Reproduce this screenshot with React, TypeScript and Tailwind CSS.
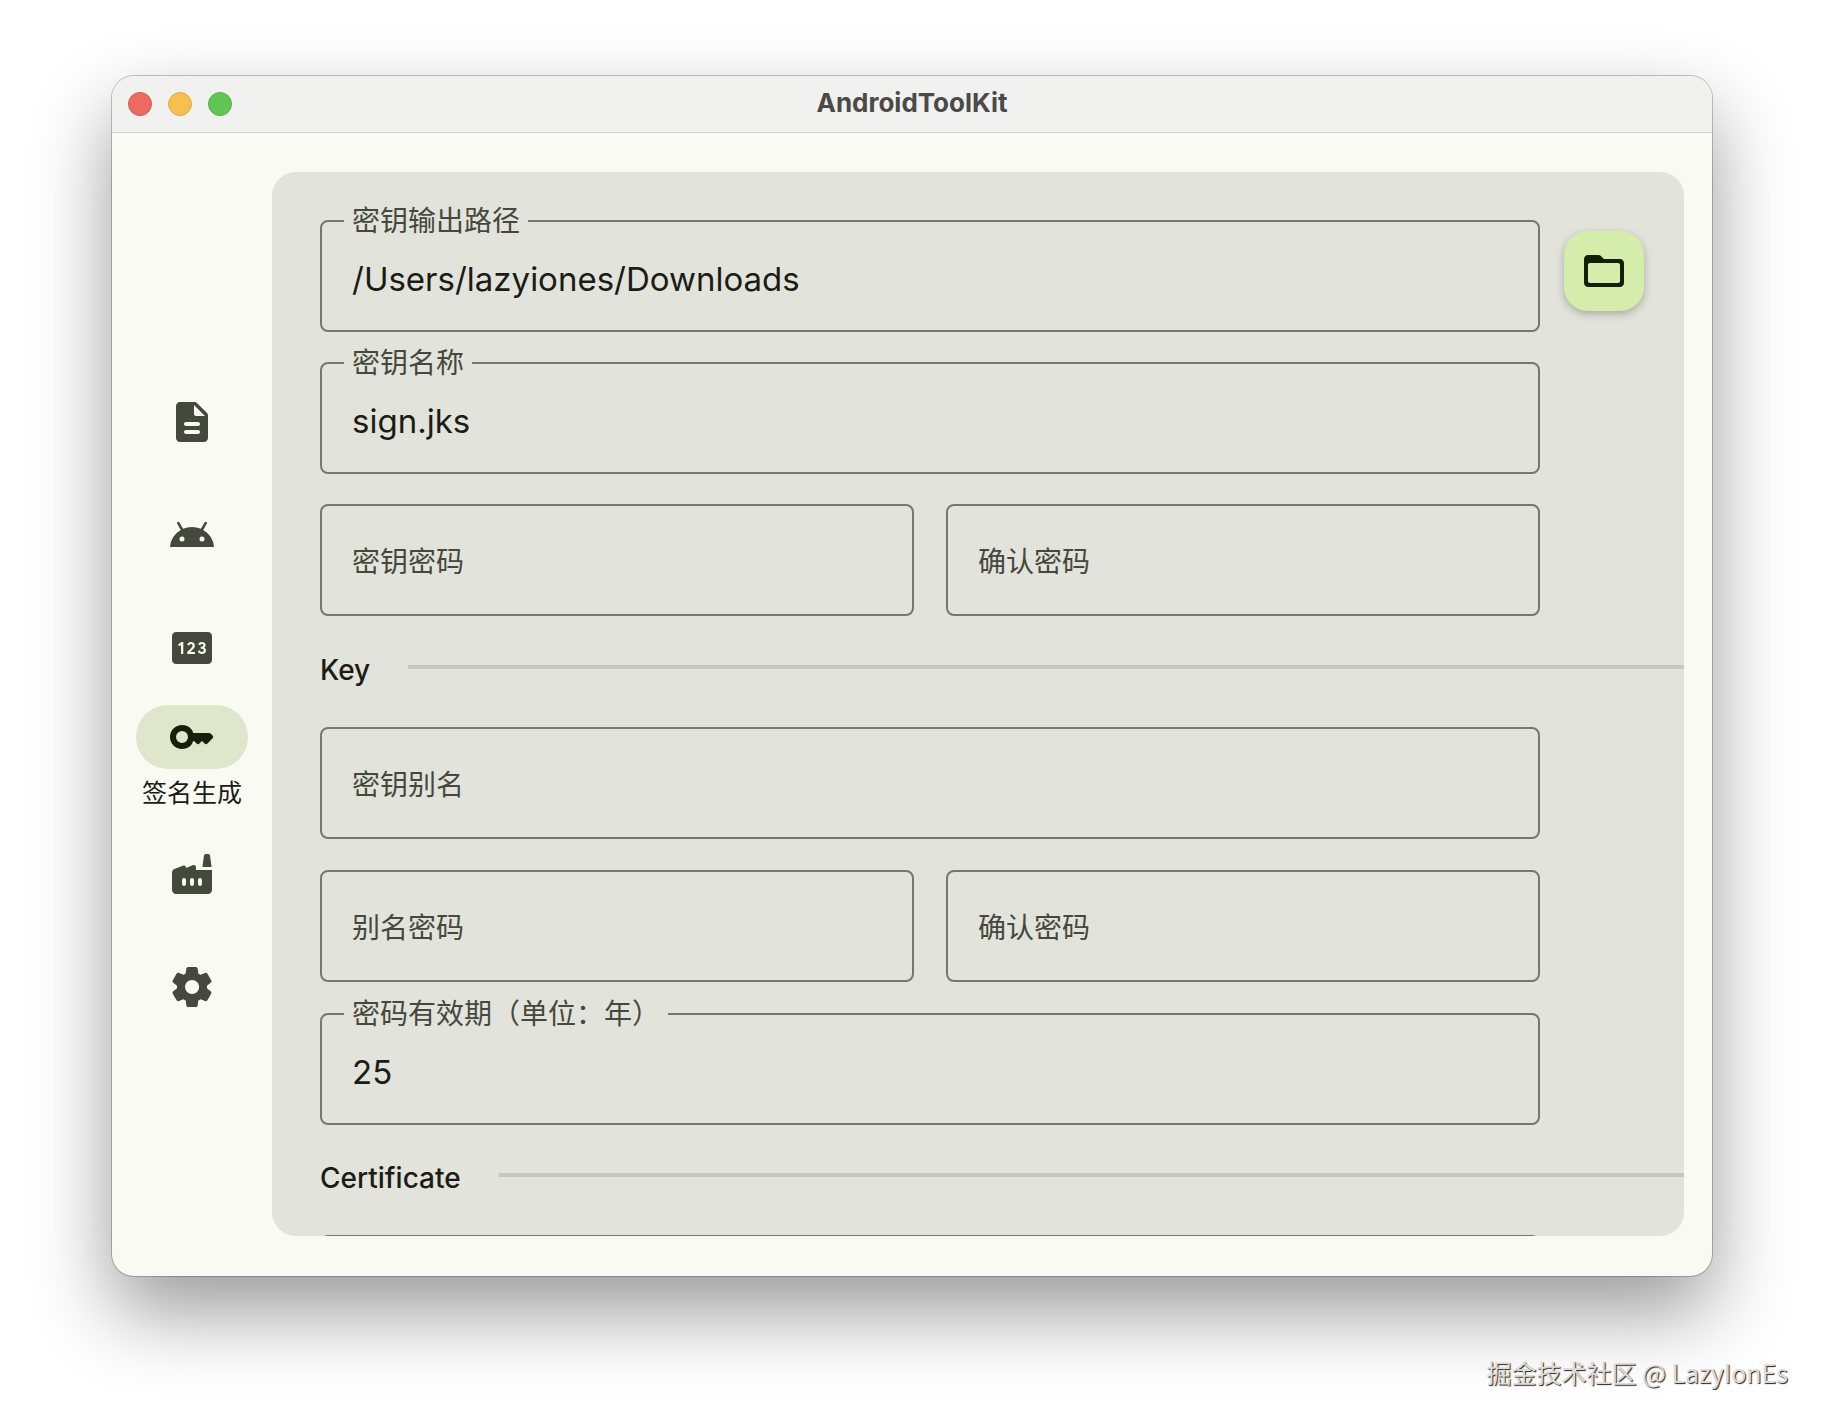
import React, { useState } from 'react';
import { MdPin } from 'react-icons/md';

const iconPaths = {
  description:
    'M14.59 2.59c-.38-.38-.89-.59-1.42-.59H6c-1.1 0-2 .9-2 2v16c0 1.1.89 2 1.99 2H18c1.1 0 2-.9 2-2V8.83c0-.53-.21-1.04-.59-1.41l-4.82-4.83zM15 18H9c-.55 0-1-.45-1-1s.45-1 1-1h6c.55 0 1 .45 1 1s-.45 1-1 1zm0-4H9c-.55 0-1-.45-1-1s.45-1 1-1h6c.55 0 1 .45 1 1s-.45 1-1 1zm-2-6V3.5L18.5 9H14c-.55 0-1-.45-1-1z',
  android:
    'M17.6 9.48l1.84-3.18c.16-.31.04-.69-.26-.85a.637.637 0 0 0-.83.22l-1.88 3.24a11.463 11.463 0 0 0-8.94 0L5.65 5.67a.643.643 0 0 0-.87-.2c-.28.18-.37.54-.22.83L6.4 9.48A10.78 10.78 0 0 0 1 18h22a10.78 10.78 0 0 0-5.4-8.52zM7 15.25a1.25 1.25 0 1 1 0-2.5 1.25 1.25 0 0 1 0 2.5zm10 0a1.25 1.25 0 1 1 0-2.5 1.25 1.25 0 0 1 0 2.5z',
  key: 'M20.59 10h-7.94A5.99 5.99 0 0 0 7 6c-3.31 0-6 2.69-6 6s2.69 6 6 6a5.99 5.99 0 0 0 5.65-4H13l1.29 1.29c.39.39 1.02.39 1.41 0L17 14l1.29 1.29c.39.39 1.03.39 1.42 0l2.59-2.61a1 1 0 0 0-.01-1.42l-.99-.97c-.2-.19-.45-.29-.71-.29zM7 15a3 3 0 1 1 0-6 3 3 0 0 1 0 6z',
  factory:
    'M22 10v10c0 1.1-.9 2-2 2H4c-1.1 0-2-.9-2-2v-8.6c0-.82.5-1.55 1.25-1.85L7.63 7.8c.65-.26 1.37.22 1.37.93V9l3.63-1.45c.65-.26 1.37.22 1.37.92V10h8zM17.96 2.88c.07-.5.5-.88 1-.88h1.07c.5 0 .93.38.99.88l.78 5.62h-4.6l.76-5.62zM8 18c.55 0 1-.45 1-1v-2c0-.55-.45-1-1-1s-1 .45-1 1v2c0 .55.45 1 1 1zm4 0c.55 0 1-.45 1-1v-2c0-.55-.45-1-1-1s-1 .45-1 1v2c0 .55.45 1 1 1zm4 0c.55 0 1-.45 1-1v-2c0-.55-.45-1-1-1s-1 .45-1 1v2c0 .55.45 1 1 1z',
  settings:
    'M19.5 12c0-.23-.01-.45-.03-.68l1.86-1.41c.4-.3.51-.86.26-1.3l-1.87-3.23a.987.987 0 0 0-1.25-.42l-2.15.91c-.37-.26-.76-.49-1.17-.68l-.29-2.31c-.06-.5-.49-.88-.99-.88h-3.73c-.51 0-.94.38-1 .88l-.29 2.31c-.41.19-.8.42-1.17.68l-2.15-.91c-.46-.2-1-.02-1.25.42L2.41 8.62c-.25.44-.14.99.26 1.3l1.86 1.41a7.343 7.343 0 0 0 0 1.35l-1.86 1.41c-.4.3-.51.86-.26 1.3l1.87 3.23c.25.44.79.62 1.25.42l2.15-.91c.37.26.76.49 1.17.68l.29 2.31c.06.5.49.88.99.88h3.73c.5 0 .93-.38.99-.88l.29-2.31c.41-.19.8-.42 1.17-.68l2.15.91c.46.2 1 .02 1.25-.42l1.87-3.23c.25-.44.14-.99-.26-1.3l-1.86-1.41c.03-.23.04-.45.04-.68zm-7.46 3.5c-1.93 0-3.5-1.57-3.5-3.5s1.57-3.5 3.5-3.5 3.5 1.57 3.5 3.5-1.57 3.5-3.5 3.5z',
  folder:
    'M20 6h-8l-1.41-1.41C10.21 4.21 9.7 4 9.17 4H4c-1.1 0-1.99.9-1.99 2L2 18c0 1.1.9 2 2 2h16c1.1 0 2-.9 2-2V8c0-1.1-.9-2-2-2zm-1 12H5c-.55 0-1-.45-1-1V9c0-.55.45-1 1-1h14c.55 0 1 .45 1 1v8c0 .55-.45 1-1 1z',
};

const Icon: React.FC<{ name: keyof typeof iconPaths }> = ({ name }) => (
  <svg viewBox="0 0 24 24" className="size-12" fill="currentColor" fillRule="evenodd" aria-hidden="true">
    <path d={iconPaths[name]} />
  </svg>
);

const navItems = [
  { id: 'info', icon: <Icon name="description" /> },
  { id: 'apk', icon: <Icon name="android" /> },
  { id: 'pin', icon: <MdPin className="size-12" /> },
  { id: 'sign', icon: <Icon name="key" />, label: '签名生成' },
  { id: 'build', icon: <Icon name="factory" /> },
  { id: 'settings', icon: <Icon name="settings" /> },
];

interface FieldProps {
  id: string;
  label: string;
  value: string;
  type?: string;
  onChange: (id: string, value: string) => void;
}

// Outlined field: the label sits in the border once there is a value
const Field: React.FC<FieldProps> = ({ id, label, value, type = 'text', onChange }) => (
  <fieldset className="h-28 min-w-0 flex-1 rounded-lg border-2 border-[#76786d] pl-[22px]">
    {value && (
      <legend className="h-0.5 px-2 leading-[2px]">
        <label htmlFor={id} className="text-[28px] text-[#45483d]">
          {label}
        </label>
      </legend>
    )}
    <input
      id={id}
      type={type}
      value={value}
      placeholder={label}
      aria-label={label}
      onChange={(e) => onChange(id, e.target.value)}
      className="h-full w-full bg-transparent px-2 pt-1.5 text-[33px] text-[#1a1c16] outline-none placeholder:text-[28px] placeholder:text-[#45483d] placeholder-shown:pt-0"
    />
  </fieldset>
);

const Section: React.FC<{ title: string }> = ({ title }) => (
  <div className="flex h-[110px] shrink-0 items-center gap-[38px] pb-1">
    <h2 className="text-[28px] font-medium text-[#1a1c16]">{title}</h2>
    <hr className="mb-1.5 flex-1 border-t-4 border-[#c6c7be]" />
  </div>
);

export default function App() {
  const [active, setActive] = useState('sign');
  const [form, setForm] = useState<Record<string, string>>({
    path: '/Users/lazyiones/Downloads',
    name: 'sign.jks',
    validity: '25',
  });

  const handleChange = (id: string, value: string) => setForm({ ...form, [id]: value });

  const field = (id: string, label: string, type?: string) => (
    <Field id={id} label={label} type={type} value={form[id] ?? ''} onChange={handleChange} />
  );

  return (
    <div className="relative flex h-screen flex-col bg-white px-28 pt-[76px] pb-[148px] font-['Inter','Noto_Sans_CJK_SC',sans-serif]">
      <div className="flex min-h-0 flex-1 flex-col overflow-hidden rounded-[22px] bg-[#f9faf1] shadow-[0_0_0_1px_rgba(0,0,0,0.22),0_36px_80px_rgba(0,0,0,0.4)]">
        <header className="grid h-[57px] shrink-0 grid-cols-3 items-center border-b border-[#d3d4cf] bg-[#f1f1ef] px-4">
          <div className="flex gap-4">
            <button type="button" aria-label="Close" className="size-6 rounded-full border border-[#d9574e] bg-[#ec6a5f]" />
            <button type="button" aria-label="Minimize" className="size-6 rounded-full border border-[#dfa83f] bg-[#f5c04f]" />
            <button type="button" aria-label="Zoom" className="size-6 rounded-full border border-[#4eb143] bg-[#61c655]" />
          </div>
          <h1 className="pb-1 text-center text-[26px] font-bold text-[#4a4a48]">AndroidToolKit</h1>
        </header>

        <div className="flex min-h-0 flex-1">
          <nav className="flex w-40 shrink-0 flex-col items-center justify-center gap-px">
            {navItems.map(({ id, icon, label }) => (
              <button
                key={id}
                type="button"
                aria-label={label ?? id}
                onClick={() => setActive(id)}
                className="flex h-28 w-28 flex-col items-center justify-center text-[#45483d]"
              >
                <span
                  className={
                    active === id
                      ? 'flex h-16 w-28 items-center justify-center rounded-full bg-[#dee7cb] text-[#171e0a]'
                      : 'flex h-16 w-28 items-center justify-center'
                  }
                >
                  {icon}
                </span>
                {active === id && label && (
                  <span className="h-12 pt-1 text-[25px] leading-10 text-[#1a1c16]">{label}</span>
                )}
              </button>
            ))}
          </nav>

          <main className="mt-[39px] mr-7 mb-10 min-w-0 flex-1 overflow-y-auto rounded-3xl bg-[#e2e3da] pt-12 pl-12 [scrollbar-width:none]">
            <div className="flex flex-col gap-[30px] pb-px">
              <div className="flex items-center gap-6 pr-10">
                {field('path', '密钥输出路径')}
                <button
                  type="button"
                  aria-label="选择"
                  className="mb-2.5 flex size-20 items-center justify-center rounded-3xl bg-[#d4edaa] text-[#102000] shadow-[0_3px_8px_rgba(0,0,0,0.25)]"
                >
                  <Icon name="folder" />
                </button>
              </div>
              <div className="flex pr-36">{field('name', '密钥名称')}</div>
              <div className="flex gap-8 pr-36">
                {field('storePassword', '密钥密码', 'password')}
                {field('storePasswordConfirm', '确认密码', 'password')}
              </div>
            </div>

            <Section title="Key" />

            <div className="flex flex-col gap-[31px]">
              <div className="flex pr-36">{field('alias', '密钥别名')}</div>
              <div className="flex gap-8 pr-36">
                {field('aliasPassword', '别名密码', 'password')}
                {field('aliasPasswordConfirm', '确认密码', 'password')}
              </div>
              <div className="flex pr-36">{field('validity', '密码有效期（单位：年）')}</div>
            </div>

            <Section title="Certificate" />

            <div className="flex pr-36 pb-12">{field('author', '')}</div>
          </main>
        </div>
      </div>

      <p className="absolute right-9 bottom-[33px] font-['Noto_Sans_CJK_SC',sans-serif] text-[25px] text-[#dcdcdc] [text-shadow:1px_1px_1px_#222]">
        掘金技术社区 @ LazyIonEs
      </p>
    </div>
  );
}
